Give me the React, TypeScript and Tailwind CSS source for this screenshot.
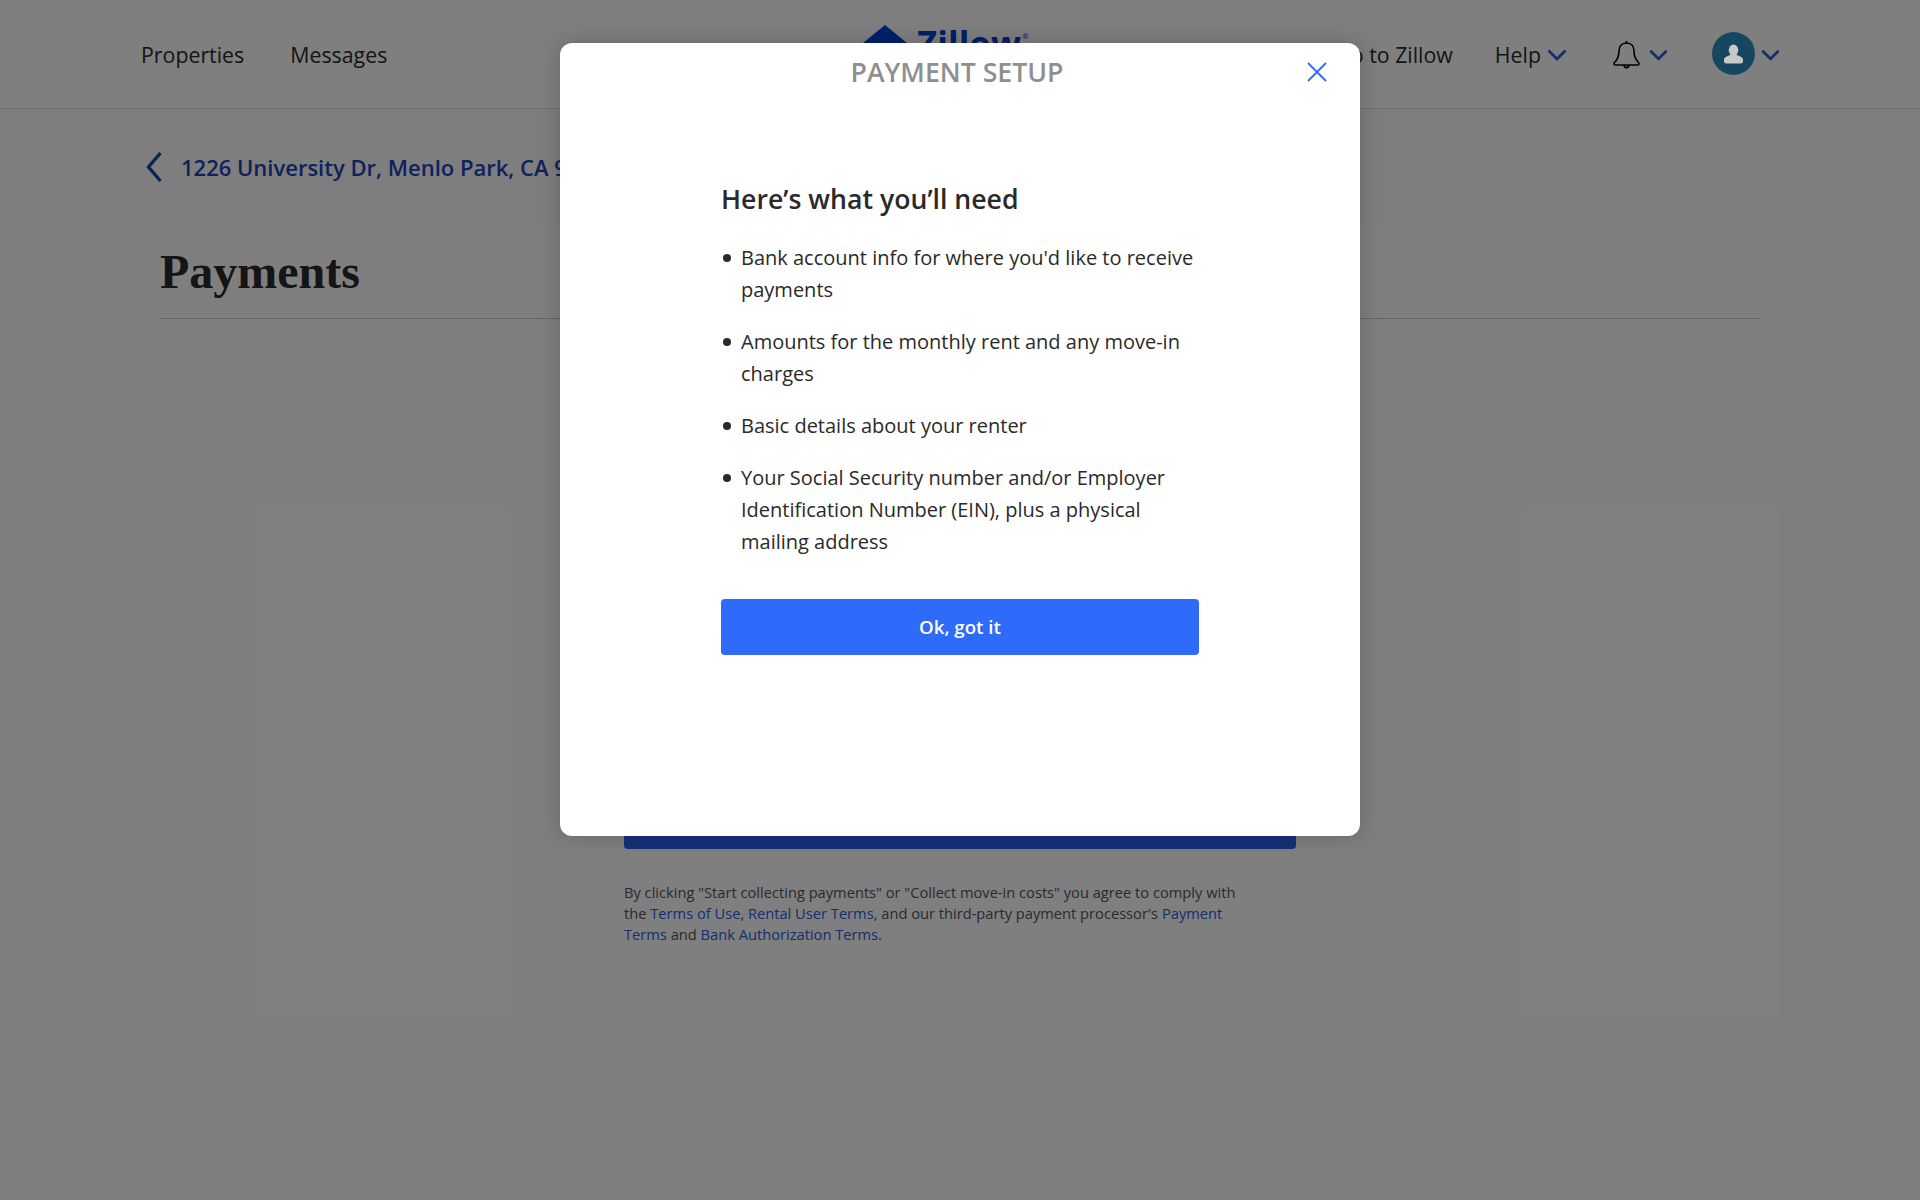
import React from 'react';

const sans = { fontFamily: '"Open Sans", sans-serif' };

const Chevron = ({ className }: { className: string }) => (
  <svg viewBox="0 0 20 12" fill="none" className={className}>
    <path d="M1.500 1.500L10 10l8.500-8.500" stroke="currentColor" strokeWidth="2.800" />
  </svg>
);

const needs = [
  "Bank account info for where you'd like to receive payments",
  'Amounts for the monthly rent and any move-in charges',
  'Basic details about your renter',
  'Your Social Security number and/or Employer Identification Number (EIN), plus a physical mailing address',
];

const Header = () => (
  <header className="relative flex h-[109px] items-center justify-between border-b border-[#dcdcdc] bg-white pl-[141px] pr-[140px] pt-px text-[21.33px] text-[#2a2a2a]">
    <nav className="flex gap-[46px]">
      <span>Properties</span>
      <span>Messages</span>
    </nav>
    <div className="absolute left-[863px] top-[25px] flex items-start">
      <svg viewBox="0 0 44 32" className="h-8 w-11 text-[#0041d9]">
        <path d="M22 0L44 18v14H0V18z" fill="currentColor" />
      </svg>
      <span className="ml-[10px] mt-[1px] text-[35px] font-bold leading-none text-[#0041d9]">Zillow</span>
      <span className="ml-[1px] mt-[7px] text-[8px] leading-none text-[#0041d9]">®</span>
    </div>
    <div className="flex items-center">
      <span>Go to Zillow</span>
      <span className="ml-[42px]">Help</span>
      <Chevron className="ml-[6px] mt-px h-3 w-5 text-[#2a5ce0]" />
      <svg viewBox="0 0 27 30" fill="none" className="ml-[46px] mt-px h-[30px] w-[27px] text-black">
        <path
          d="M13.500 3C8.500 3 6 6.500 6 11c0 6-2 9-4.500 11.500C.5 23.800 1 25 2.500 25h22c1.500 0 2-1.200 1-2.500C23 20 21 17 21 11c0-4.500-2.500-8-7.500-8zM11 25c0 3.500 5 3.500 5 0M13.500 1v2"
          stroke="currentColor"
          strokeWidth="1.600"
          strokeLinejoin="round"
        />
      </svg>
      <Chevron className="ml-[9px] mt-px h-3 w-[19px] text-[#2a5ce0]" />
      <div className="ml-[44px] -mt-[2px] flex h-[43px] w-[43px] items-center justify-center rounded-full bg-[#2f8fc0]">
        <svg viewBox="0 0 20 20" className="relative z-10 h-[20px] w-[19px] text-[#c8c8c8]" fill="currentColor">
          <ellipse cx="10" cy="6" rx="5" ry="6" />
          <path d="M0 18v-2c0-3 4-4 7-5h6c3 1 7 2 7 5v2c0 1-1 2-2 2H2c-1 0-2-1-2-2z" />
        </svg>
      </div>
      <Chevron className="ml-[6px] mt-px h-3 w-[19px] text-[#2a5ce0]" />
    </div>
  </header>
);

export default function App() {
  return (
    <div className="relative min-h-[1200px] bg-[#fdfdfd]" style={sans}>
      <Header />

      <main className="px-[140px]">
        <a className="flex h-[116px] items-center text-[22px] font-semibold text-[#1a44b8]">
          <svg viewBox="0 0 18 32" fill="none" className="ml-[5px] h-8 w-[18px]">
            <path d="M15.500 2L3.500 16l12 14" stroke="currentColor" strokeWidth="3.400" />
          </svg>
          <span className="ml-[18px] whitespace-nowrap">1226 University Dr, Menlo Park, CA 94025</span>
        </a>

        <section className="h-[817px] bg-white px-5">
          <h1
            className="border-b border-[#cccccc] pt-4 pb-[15px] text-[48px] font-bold leading-[62px] text-[#2a2a2a]"
            style={{ fontFamily: '"Liberation Serif", serif' }}
          >
            Payments
          </h1>
          <div className="mx-auto mt-[474px] w-[672px]">
            <button className="h-14 w-full rounded bg-[#2a60f0] text-white">Start collecting payments</button>
            <p className="mt-[33px] w-[625px] text-[14.67px] leading-[21px] text-[#555555]">
              By clicking "Start collecting payments" or "Collect move-in costs" you agree to comply with the{' '}
              <a className="text-[#2a5ce0]">Terms of Use</a>, <a className="text-[#2a5ce0]">Rental User Terms</a>, and
              our third-party payment processor's <a className="text-[#2a5ce0]">Payment Terms</a> and{' '}
              <a className="text-[#2a5ce0]">Bank Authorization Terms.</a>
            </p>
          </div>
        </section>
      </main>

      <div className="absolute inset-0 bg-black/50" />

      <div className="absolute left-[560px] top-[43px] z-20 h-[793px] w-[800px] rounded-xl bg-white shadow-[0_0_24px_rgba(0,0,0,0.2)]">
        <div className="relative pt-[10px] pr-[6px] text-center text-[26.67px] font-semibold leading-[38px] text-[#8f8f8f]">
          PAYMENT SETUP
          <svg viewBox="0 0 20 20" fill="none" className="absolute right-[33px] top-[19px] h-5 w-5 text-[#2e6bfb]">
            <path d="M1 1l18 18M19 1L1 19" stroke="currentColor" strokeWidth="1.800" />
          </svg>
        </div>

        <div className="mx-auto mt-[90px] w-[478px]">
          <h2 className="text-[26.67px] font-semibold leading-9 text-[#2a2a2a]">Here’s what you’ll need</h2>
          <ul className="mt-[25px] flex flex-col gap-5 text-[20px] leading-8 text-[#2a2a2a]">
            {needs.map((item) => (
              <li key={item} className="relative pl-5">
                <span className="absolute left-[2px] top-[12px] h-2 w-2 rounded-full bg-[#2a2a2a]" />
                {item}
              </li>
            ))}
          </ul>
          <button className="mt-[41px] h-14 w-full rounded bg-[#2e6bfb] text-[18.67px] font-semibold text-white">
            Ok, got it
          </button>
        </div>
      </div>
    </div>
  );
}
